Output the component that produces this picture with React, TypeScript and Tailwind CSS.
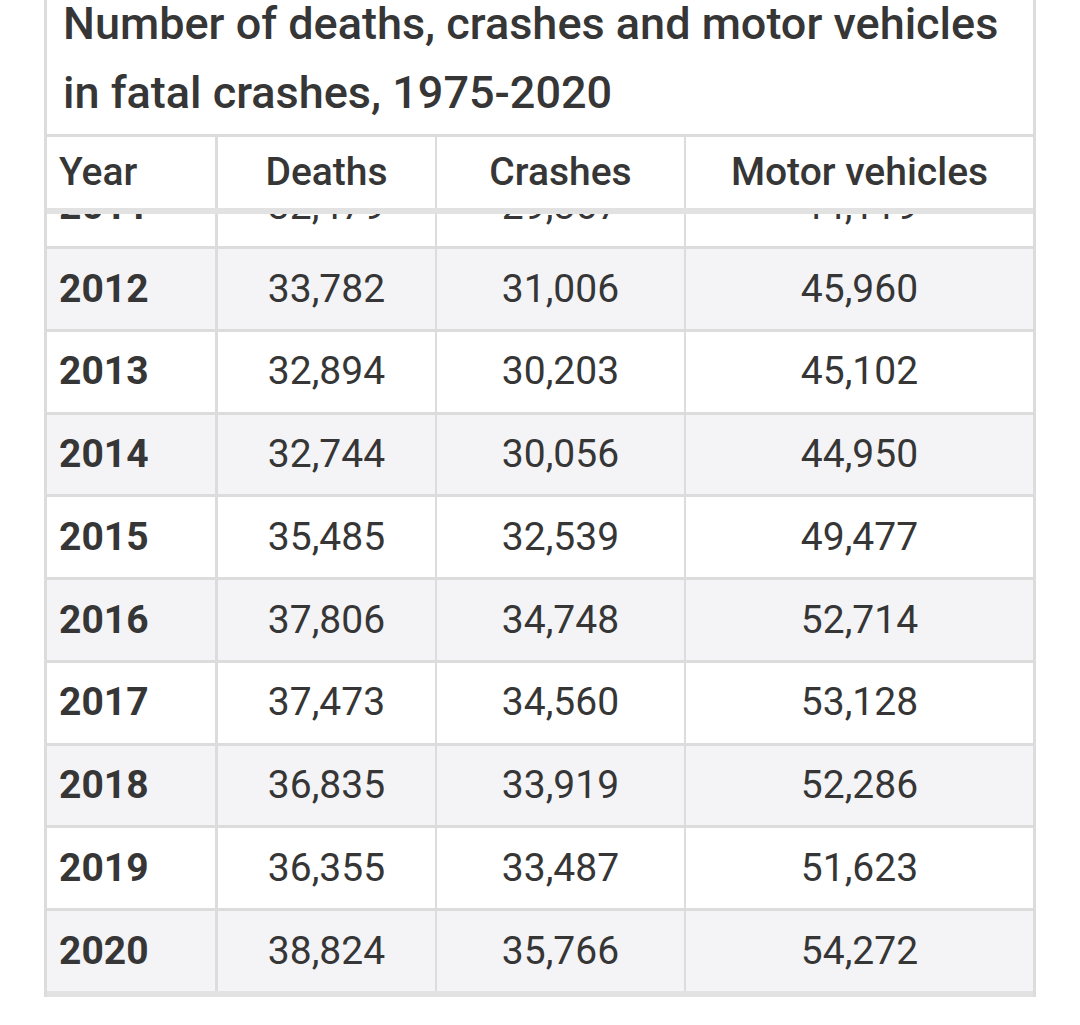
const rows = [
  { year: "2011", deaths: "32,479", crashes: "29,867", vehicles: "44,119" },
  { year: "2012", deaths: "33,782", crashes: "31,006", vehicles: "45,960" },
  { year: "2013", deaths: "32,894", crashes: "30,203", vehicles: "45,102" },
  { year: "2014", deaths: "32,744", crashes: "30,056", vehicles: "44,950" },
  { year: "2015", deaths: "35,485", crashes: "32,539", vehicles: "49,477" },
  { year: "2016", deaths: "37,806", crashes: "34,748", vehicles: "52,714" },
  { year: "2017", deaths: "37,473", crashes: "34,560", vehicles: "53,128" },
  { year: "2018", deaths: "36,835", crashes: "33,919", vehicles: "52,286" },
  { year: "2019", deaths: "36,355", crashes: "33,487", vehicles: "51,623" },
  { year: "2020", deaths: "38,824", crashes: "35,766", vehicles: "54,272" },
]

type Row = (typeof rows)[number]

function Cells({ row }: { row: Row }) {
  return (
    <>
      <div className="w-[171px] shrink-0 border-r-[3px] border-[#dcdcdc] pl-[12px] flex items-center font-bold">
        {row.year}
      </div>
      <div className="w-[219px] shrink-0 border-r-[2px] border-[#dcdcdc] flex items-center justify-center">
        {row.deaths}
      </div>
      <div className="w-[249px] shrink-0 border-r-[2px] border-[#dcdcdc] flex items-center justify-center">
        {row.crashes}
      </div>
      <div className="flex-1 flex items-center justify-center">{row.vehicles}</div>
    </>
  )
}

export default function App() {
  const [first, ...rest] = rows

  return (
    <div
      className="min-h-screen bg-white text-[#363636]"
      style={{ fontFamily: "Roboto, 'Liberation Sans', sans-serif" }}
    >
      <div className="ml-[44px] w-[992px] border-x-[3px] border-[#dcdcdc]">
        {/* Caption */}
        <div className="h-[134px] overflow-hidden pl-[16px]">
          <h1 className="-mt-[11px] text-[45px] leading-[69px] font-medium">
            Number of deaths, crashes and motor vehicles in fatal crashes, 1975-2020
          </h1>
        </div>

        {/* Header */}
        <div className="flex h-[80px] border-t-[3px] border-b-[6px] border-t-[#dcdcdc] border-b-[#e2e2e2] text-[39px] font-medium">
          <div className="w-[171px] shrink-0 border-r-[3px] border-[#dcdcdc] pl-[12px] flex items-center">Year</div>
          <div className="w-[219px] shrink-0 border-r-[2px] border-[#dcdcdc] flex items-center justify-center">Deaths</div>
          <div className="w-[249px] shrink-0 border-r-[2px] border-[#dcdcdc] flex items-center justify-center">Crashes</div>
          <div className="flex-1 flex items-center justify-center">Motor vehicles</div>
        </div>

        {/* Row scrolled under the header */}
        <div className="h-[32px] overflow-hidden flex flex-col justify-end">
          <div className="flex h-[79.75px] shrink-0 text-[39px] bg-white">
            <Cells row={first} />
          </div>
        </div>

        {rest.map((row, i) => (
          <div
            key={row.year}
            className={`flex h-[82.75px] border-t-[3px] border-[#dcdcdc] text-[39px] ${
              i % 2 === 0 ? "bg-[#f4f4f6]" : "bg-white"
            }`}
          >
            <Cells row={row} />
          </div>
        ))}
        <div className="h-[6px] bg-[#e2e2e2]" />
      </div>
    </div>
  )
}
